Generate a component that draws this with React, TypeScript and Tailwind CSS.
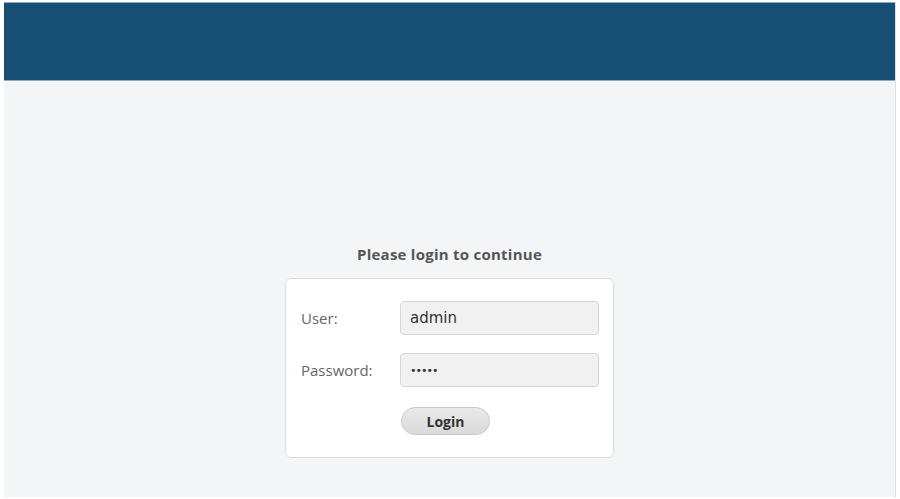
import { useState } from 'react';

const App = () => {
  const [user, setUser] = useState('admin');
  const [password, setPassword] = useState('admin');

  return (
    <div className="h-[499px] w-[900px] bg-white pl-[4px] pr-[4px] pt-[2px] pb-[2px]">
      <div className="flex h-full flex-col border-r border-[#dcdfe3]" style={{ fontFamily: '"Open Sans", "DejaVu Sans", sans-serif' }}>
        {/* Header bar */}
        <div className="h-[79px] shrink-0 border-y border-[#8fa9c2] bg-[#164e74]" />

        {/* Login area */}
        <div className="flex flex-1 flex-col items-center bg-[#f4f5f7] pt-[163px]">
          <h1 className="mb-[14px] text-[15px] font-bold leading-[20px] tracking-[0.25px] text-[#555]">Please login to continue</h1>

          <div className="w-[329px] rounded-[6px] border border-[#dadde0] bg-white px-[15px] pt-[22px] pb-[22px]">
            <div className="grid grid-cols-[99px_199px] items-center gap-y-[18px]">
              <label className="text-[15px] text-[#666]">User:</label>
              <input
                value={user}
                onChange={(e) => setUser(e.target.value)}
                className="h-[34px] rounded-[4px] border border-[#d6d6d6] bg-[#f1f1f1] px-[9px] text-[15px] text-[#333] outline-none"
                style={{ fontFamily: '"DejaVu Sans", sans-serif' }}
              />
              <label className="text-[15px] text-[#666]">Password:</label>
              <input
                type="password"
                value={password}
                onChange={(e) => setPassword(e.target.value)}
                className="h-[34px] rounded-[4px] border border-[#d6d6d6] bg-[#f1f1f1] px-[9px] text-[11px] tracking-[-1px] text-[#333] outline-none"
                style={{ fontFamily: '"DejaVu Sans", sans-serif' }}
              />
            </div>

            <div className="mt-[20px] flex pl-[100px]">
              <button className="h-[28px] w-[89px] rounded-full border border-[#c9c9c9] bg-gradient-to-b from-[#e9e9e9] to-[#dadada] text-[14px] font-bold text-[#333]">
                Login
              </button>
            </div>
          </div>
        </div>
      </div>
    </div>
  );
};

export default App;
